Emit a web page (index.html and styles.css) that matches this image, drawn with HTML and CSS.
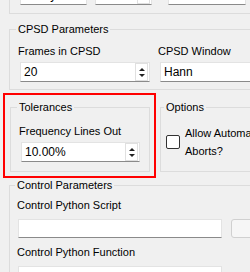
FILE: index.html
```html
<!DOCTYPE html>
<html lang="en">
<head>
    <meta charset="UTF-8">
    <title>CPSD Parameters</title>
    <link rel="stylesheet" href="styles.css">
</head>
<body>
    <div class="page">
        <fieldset class="group top-group">
            <div class="top-row">
                <div class="combo w-tukey"><span>Tukey</span><span class="drop"></span></div>
                <div class="spin w-small"><span>0.0000 %</span><span class="arrows"><i class="up"></i><i class="down"></i></span></div>
                <div class="combo w-third"><span>0.50</span><span class="drop"></span></div>
            </div>
        </fieldset>

        <fieldset class="group cpsd-group">
            <legend>CPSD Parameters</legend>
            <div class="cpsd-grid">
                <div class="field">
                    <label>Frames in CPSD</label>
                    <div class="spin"><span>20</span><span class="arrows"><i class="up"></i><i class="down"></i></span></div>
                </div>
                <div class="field">
                    <label>CPSD Window</label>
                    <div class="combo"><span>Hann</span><span class="drop"></span></div>
                </div>
            </div>
        </fieldset>

        <div class="pair">
            <fieldset class="group tol-group">
                <legend>Tolerances</legend>
                <div class="field">
                    <label>Frequency Lines Out</label>
                    <div class="spin"><span>10.00%</span><span class="arrows"><i class="up"></i><i class="down"></i></span></div>
                </div>
            </fieldset>
            <fieldset class="group opt-group">
                <legend>Options</legend>
                <div class="check-row">
                    <span class="checkbox"></span>
                    <span class="check-label">Allow Automatic<br>Aborts?</span>
                </div>
            </fieldset>
        </div>

        <fieldset class="group ctrl-group">
            <legend>Control Parameters</legend>
            <label>Control Python Script</label>
            <div class="file-row">
                <div class="line-edit"></div>
                <div class="browse"></div>
            </div>
            <label>Control Python Function</label>
            <div class="line-edit"></div>
        </fieldset>

        <div class="highlight"></div>
    </div>
</body>
</html>
```

FILE: styles.css
```css
* {
    margin: 0;
    padding: 0;
    box-sizing: border-box;
}

body {
    font-family: "Liberation Sans", Arial, sans-serif;
    font-size: 11px;
    line-height: 15px;
    color: #000;
    background: #f0f0f0;
    overflow: hidden;
    width: 250px;
    height: 272px;
}

.page {
    position: relative;
    display: flex;
    flex-direction: column;
    width: 420px;
    padding-left: 9px;
}

.group {
    border: 1px solid #dcdcdc;
    padding: 0 8px;
    min-width: 0;
}

.group legend {
    padding: 0 2px;
    margin-left: -2px;
}

label {
    display: block;
}

/* top group, cut off by the window */
.top-group {
    margin-top: -16px;
    padding: 0 0 8px 10px;
    border-top-color: transparent;
}

.top-row {
    display: flex;
}

.w-tukey { width: 67px; }
.w-small { width: 57px; margin-left: 8px; }
.w-third { width: 78px; margin-left: 16px; }

/* inputs */
.spin,
.combo,
.line-edit {
    display: flex;
    align-items: center;
    height: 20px;
    background: #fff;
    border: 1px solid #e3e3e3;
    border-bottom-color: #8a8a8a;
}

.spin span:first-child,
.combo span:first-child {
    flex: 1;
    padding-left: 3px;
    font-size: 12px;
    white-space: nowrap;
    overflow: hidden;
}

.arrows {
    width: 13px;
    height: 18px;
    margin-right: 1px;
    border: 1px solid #e0e0e0;
    display: flex;
    flex-direction: column;
    align-items: center;
    justify-content: center;
    gap: 3px;
    flex-shrink: 0;
}

.arrows i {
    width: 0;
    height: 0;
    border-left: 3px solid transparent;
    border-right: 3px solid transparent;
}

.arrows .up { border-bottom: 3px solid #222; }
.arrows .down { border-top: 3px solid #222; }

.drop {
    width: 9px;
}

/* CPSD */
.cpsd-group {
    margin-top: 8px;
    padding-top: 7px;
    padding-bottom: 7px;
}

.cpsd-grid {
    display: grid;
    grid-template-columns: 132px 1fr;
    gap: 8px;
}

.field .spin,
.field .combo {
    margin-top: 3px;
    margin-left: 2px;
}

/* tolerances + options */
.pair {
    display: flex;
    gap: 10px;
    margin-top: 10px;
    padding-left: 1px;
}

.tol-group {
    width: 140px;
    padding-top: 9px;
    padding-bottom: 9px;
}

.tol-group .spin {
    margin-top: 3px;
    width: 119px;
}

.opt-group {
    flex: 1;
    padding-left: 5px;
}

.check-row {
    display: flex;
    align-items: center;
    gap: 5px;
    margin-top: 9px;
}

.checkbox {
    width: 14px;
    height: 14px;
    border: 1px solid #333;
    border-radius: 2px;
    background: #fff;
}

.check-label {
    line-height: 18px;
}

/* control parameters */
.ctrl-group {
    margin-top: 6px;
    padding: 5px 8px 0 7px;
}

.file-row {
    display: flex;
    gap: 9px;
    margin: 6px 0 7px;
}

.ctrl-group .line-edit {
    width: 204px;
    height: 19px;
    margin-left: 1px;
}

.ctrl-group label + .line-edit {
    margin-top: 6px;
}

.browse {
    width: 60px;
    height: 19px;
    border: 1px solid #d0d0d0;
    border-radius: 3px;
    background: #f6f6f6;
}

/* annotation drawn over the screenshot */
.highlight {
    position: absolute;
    left: 3px;
    top: 93px;
    width: 153px;
    height: 85px;
    border: 2px solid #f00;
}
```
